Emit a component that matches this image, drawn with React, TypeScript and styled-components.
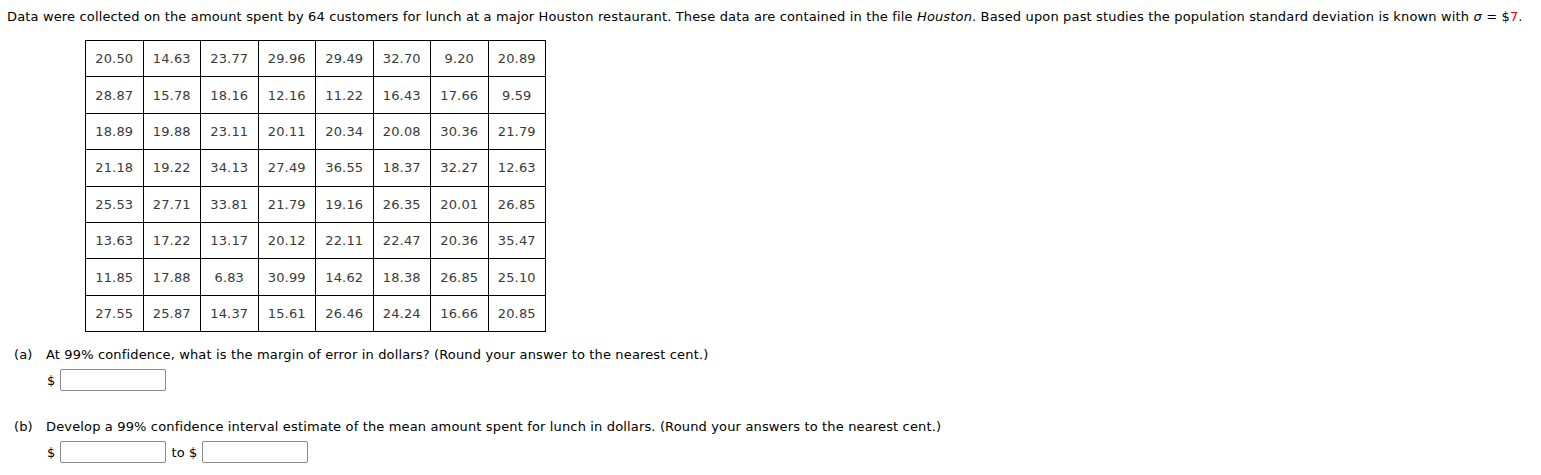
import styled, { createGlobalStyle } from 'styled-components'

const GlobalStyle = createGlobalStyle`
  body {
    margin: 0;
    background: #fff;
    font-family: "DejaVu Sans", Verdana, sans-serif;
    font-size: 13px;
    letter-spacing: 0.15px;
    color: #000;
  }
`;

const Page = styled.div`
  display: flex;
  flex-direction: column;
  align-items: flex-start;
  padding: 9px 0 0 7px;
`;

const Intro = styled.p`
  margin: 0;
  line-height: 16px;
  white-space: nowrap;
`;

const Red = styled.span`
  color: #e00;
`;

const DataTable = styled.table`
  margin: 15px 0 0 78px;
  border-collapse: collapse;
  width: 461px;
`;

const Cell = styled.td`
  border: 1px solid #000;
  height: 35.4px;
  padding: 0;
  text-align: center;
  color: #3a3a3a;
  font-size: 13px;
`;

const Question = styled.div`
  display: flex;
  flex-direction: column;
  margin-top: ${(p: { $top: number }) => p.$top}px;
`;

const Prompt = styled.div`
  display: flex;
  line-height: 16px;
  white-space: nowrap;
`;

const Label = styled.span`
  width: 32px;
  padding-left: 7px;
`;

const AnswerRow = styled.div`
  display: flex;
  align-items: center;
  gap: 5px;
  margin: ${(p: { $gap: number }) => p.$gap}px 0 0 40px;
`;

const AnswerBox = styled.input`
  box-sizing: border-box;
  width: 106px;
  height: 22px;
  border: 1px solid #8a8a8a;
  border-radius: 2px;
  margin: 0;
`;

const data = [
  ['20.50', '14.63', '23.77', '29.96', '29.49', '32.70', '9.20', '20.89'],
  ['28.87', '15.78', '18.16', '12.16', '11.22', '16.43', '17.66', '9.59'],
  ['18.89', '19.88', '23.11', '20.11', '20.34', '20.08', '30.36', '21.79'],
  ['21.18', '19.22', '34.13', '27.49', '36.55', '18.37', '32.27', '12.63'],
  ['25.53', '27.71', '33.81', '21.79', '19.16', '26.35', '20.01', '26.85'],
  ['13.63', '17.22', '13.17', '20.12', '22.11', '22.47', '20.36', '35.47'],
  ['11.85', '17.88', '6.83', '30.99', '14.62', '18.38', '26.85', '25.10'],
  ['27.55', '25.87', '14.37', '15.61', '26.46', '24.24', '16.66', '20.85'],
]

function App() {
  return (
    <>
      <GlobalStyle />
      <Page>
        <Intro>
          Data were collected on the amount spent by 64 customers for lunch at a major Houston restaurant. These data are contained in the file <i>Houston</i>. Based upon past studies the population standard deviation is known with <i>σ</i> = $<Red>7</Red>.
        </Intro>
        <DataTable>
          <tbody>
            {data.map((row, i) => (
              <tr key={i}>
                {row.map((v, j) => (
                  <Cell key={j}>{v}</Cell>
                ))}
              </tr>
            ))}
          </tbody>
        </DataTable>
        <Question $top={15}>
          <Prompt>
            <Label>(a)</Label>
            At 99% confidence, what is the margin of error in dollars? (Round your answer to the nearest cent.)
          </Prompt>
          <AnswerRow $gap={6}>
            $ <AnswerBox type="text" />
          </AnswerRow>
        </Question>
        <Question $top={28}>
          <Prompt>
            <Label>(b)</Label>
            Develop a 99% confidence interval estimate of the mean amount spent for lunch in dollars. (Round your answers to the nearest cent.)
          </Prompt>
          <AnswerRow $gap={6}>
            $ <AnswerBox type="text" /> to $ <AnswerBox type="text" />
          </AnswerRow>
        </Question>
      </Page>
    </>
  )
}

export default App
